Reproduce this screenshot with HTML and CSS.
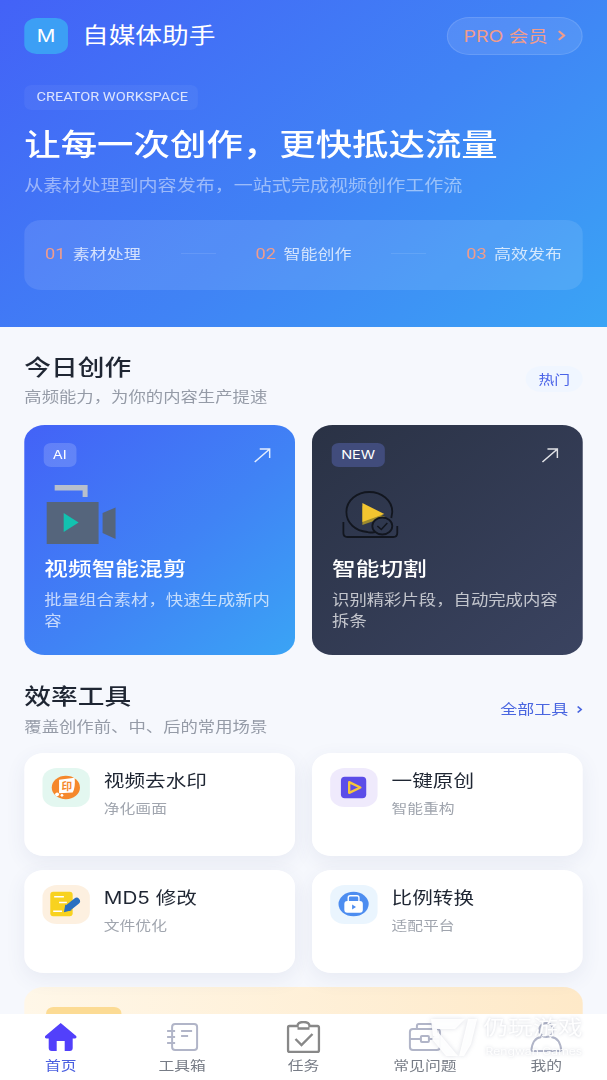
FILE: index.html
```html
<!DOCTYPE html>
<html lang="zh-CN">
<head>
  <meta charset="utf-8">
  <meta name="viewport" content="width=device-width, initial-scale=1.0">
  <title>自媒体助手</title>
  <link rel="stylesheet" href="styles.css">
</head>
<body>
  <div class="app">
    <main class="main">
      <header class="hero">
        <div class="topbar">
          <div class="brand">
            <div class="brandMark">M</div>
            <div class="brandName">自媒体助手</div>
          </div>
          <div class="proPill">
            <span>PRO 会员</span>
            <svg class="proArrow" viewBox="0 0 8 14"><path d="M1.5 2 L6.5 7 L1.5 12"/></svg>
          </div>
        </div>
        <div class="heroChip">CREATOR WORKSPACE</div>
        <h1 class="heroTitle">让每一次创作，更快抵达流量</h1>
        <p class="heroSub">从素材处理到内容发布，一站式完成视频创作工作流</p>
        <div class="steps">
          <div class="step"><span class="stepNum">01</span><span>素材处理</span></div>
          <div class="stepLine"></div>
          <div class="step"><span class="stepNum">02</span><span>智能创作</span></div>
          <div class="stepLine"></div>
          <div class="step"><span class="stepNum">03</span><span>高效发布</span></div>
        </div>
      </header>

      <section class="section">
        <div class="sectionHead">
          <div>
            <h2 class="sectionTitle">今日创作</h2>
            <p class="sectionSub">高频能力，为你的内容生产提速</p>
          </div>
          <span class="hotBadge">热门</span>
        </div>
        <div class="featureGrid">
          <div class="feature featureBlue">
            <div class="featureTop">
              <span class="featureTag">AI</span>
              <svg class="featureArrow" viewBox="0 0 17 15" preserveAspectRatio="none"><path d="M1 14 L16 1 M6 1 H16 V10"/></svg>
            </div>
            <svg class="featureIcon" viewBox="0 0 73 60" preserveAspectRatio="none">
              <path fill="#b7bfcd" d="M11 1 H44 V13 H39 V6.5 H11 Z"/>
              <rect fill="#55657c" x="3" y="18" width="52" height="42"/>
              <path fill="#55657c" d="M59 29 L72 23.5 V55 L59 49 Z"/>
              <path fill="#12c2b0" d="M20 29 L35 38.5 L20 48 Z"/>
            </svg>
            <h3 class="featureName">视频智能混剪</h3>
            <p class="featureDesc">批量组合素材，快速生成新内容</p>
          </div>
          <div class="feature featureDark">
            <div class="featureTop">
              <span class="featureTag featureTagNew">NEW</span>
              <svg class="featureArrow" viewBox="0 0 17 15" preserveAspectRatio="none"><path d="M1 14 L16 1 M6 1 H16 V10"/></svg>
            </div>
            <svg class="featureIcon" viewBox="0 0 73 60" preserveAspectRatio="none">
              <path fill="none" stroke="#12161f" stroke-width="1.8" d="M44 48 Q38 49 36 48 C24 47 15 39 15 28 C15 16 26 8 38 8 C50 8 61 16 61 28 L60 34"/>
              <path fill="none" stroke="#12161f" stroke-width="1.8" d="M12 38 V49 Q12 53 16 53 H62 Q66 53 66 49 V42"/>
              <path fill="#9c8a2e" d="M31 22 L54 33 L31 41 Z"/>
              <path fill="#f3c530" d="M31 19 L53 30 L31 38 Z"/>
              <ellipse cx="51" cy="42" rx="10" ry="8.5" fill="#2f384e" stroke="#12161f" stroke-width="1.8"/>
              <path fill="none" stroke="#12161f" stroke-width="1.6" d="M46 42 L50 45.5 L56 39"/>
            </svg>
            <h3 class="featureName">智能切割</h3>
            <p class="featureDesc">识别精彩片段，自动完成内容拆条</p>
          </div>
        </div>
      </section>

      <section class="section sectionTools">
        <div class="sectionHead">
          <div>
            <h2 class="sectionTitle">效率工具</h2>
            <p class="sectionSub">覆盖创作前、中、后的常用场景</p>
          </div>
          <span class="allTools">全部工具
            <svg class="allArrow" viewBox="0 0 6 10"><path d="M1 1.5 L4.5 5 L1 8.5"/></svg>
          </span>
        </div>
        <div class="toolGrid">
          <div class="tool">
            <div class="toolTile tileGreen">
              <svg viewBox="0 0 48 40" preserveAspectRatio="none">
                <ellipse cx="24" cy="20" rx="14.5" ry="12" fill="#f5882c"/>
                <path fill="#fff" d="M17 12 L33 10 Q34 20 31 25 L17 26 Z"/>
                <text class="sealText" x="25" y="23">印</text>
                <circle cx="15" cy="27" r="2" fill="#fff"/>
                <circle cx="20" cy="28" r="1.4" fill="#fff"/>
              </svg>
            </div>
            <div>
              <div class="toolName">视频去水印</div>
              <div class="toolSub">净化画面</div>
            </div>
          </div>
          <div class="tool">
            <div class="toolTile tilePurple">
              <svg viewBox="0 0 48 40" preserveAspectRatio="none">
                <rect x="11" y="9" width="26" height="22" rx="4" fill="#5b4de8"/>
                <path fill="none" stroke="#f5c63a" stroke-width="2.4" stroke-linejoin="round" d="M19.5 14.5 L31 20 L19.5 25.5 Z"/>
              </svg>
            </div>
            <div>
              <div class="toolName">一键原创</div>
              <div class="toolSub">智能重构</div>
            </div>
          </div>
          <div class="tool">
            <div class="toolTile tileOrange">
              <svg viewBox="0 0 48 40" preserveAspectRatio="none">
                <rect x="8" y="7" width="23" height="25" rx="3" fill="#f8d21f"/>
                <path stroke="#fff" stroke-width="1.6" d="M12 12 H22 M17 18 H25 M11 27 H20"/>
                <path stroke="#2a6fc0" stroke-width="7" stroke-linecap="round" d="M27 23 L35 16.5"/>
                <path fill="#2a6fc0" d="M22 28 L23.5 20 L30 26 Z"/>
              </svg>
            </div>
            <div>
              <div class="toolName">MD5 修改</div>
              <div class="toolSub">文件优化</div>
            </div>
          </div>
          <div class="tool">
            <div class="toolTile tileBlue">
              <svg viewBox="0 0 48 40" preserveAspectRatio="none">
                <ellipse cx="24" cy="19.5" rx="15.5" ry="12.5" fill="#4d8df0"/>
                <rect x="18.5" y="11" width="11" height="7" rx="2" fill="none" stroke="#fff" stroke-width="1.4"/>
                <rect x="14.5" y="16.5" width="19" height="12" rx="3" fill="#fff"/>
                <path fill="#4d8df0" d="M22.5 20 L26.5 22.5 L22.5 25 Z"/>
              </svg>
            </div>
            <div>
              <div class="toolName">比例转换</div>
              <div class="toolSub">适配平台</div>
            </div>
          </div>
        </div>
        <div class="promo"><div class="promoTag"></div></div>
      </section>
    </main>

    <nav class="tabbar">
      <div class="tab tabActive">
        <svg class="tabIcon" viewBox="0 0 34 32" preserveAspectRatio="none">
          <path class="homeFill" d="M17 2 L32.5 15 Q33.5 17 31 17.5 H29 V27 Q29 30 26 30 H21 V20 H13 V30 H8 Q5 30 5 27 V17.5 H3 Q0.5 17 1.5 15 Z"/>
        </svg>
        <span>首页</span>
      </div>
      <div class="tab">
        <svg class="tabIcon" viewBox="0 0 34 32" preserveAspectRatio="none">
          <rect class="softLine" x="7" y="3" width="25" height="26" rx="3"/>
          <path class="softLine" d="M2 10 H10 M2 16 H10 M2 22 H10 M16 10 H27 M16 15 H23"/>
        </svg>
        <span>工具箱</span>
      </div>
      <div class="tab">
        <svg class="tabIcon" viewBox="0 0 34 32" preserveAspectRatio="none">
          <path class="grayLine" d="M11 5 H3 Q1.5 5 1.5 7 V29 Q1.5 31 3 31 H31 Q32.5 31 32.5 29 V7 Q32.5 5 31 5 H23 Q23 1 17 1 Q11 1 11 5 Z M11 7.5 H23"/>
          <path class="grayLine" d="M9 18 L15 24 L26 13"/>
        </svg>
        <span>任务</span>
      </div>
      <div class="tab">
        <svg class="tabIcon" viewBox="0 0 34 32" preserveAspectRatio="none">
          <rect class="softLine" x="2" y="8" width="30" height="21" rx="3"/>
          <path class="softLine" d="M9 8 V5 Q9 3 11 3 H23 Q25 3 25 5 V8 M2 18 H13 M21 18 H32"/>
          <rect class="softLine" x="13" y="15" width="8" height="6" rx="1"/>
        </svg>
        <span>常见问题</span>
      </div>
      <div class="tab">
        <svg class="tabIcon" viewBox="0 0 34 32" preserveAspectRatio="none">
          <ellipse class="softLine" cx="17" cy="9" rx="7" ry="7"/>
          <path class="softLine" d="M2 30 Q3 17 12 16 M32 30 Q31 17 22 16 M2 30 H32"/>
        </svg>
        <span>我的</span>
      </div>
      <div class="watermark">
        <svg class="wmMark" viewBox="0 0 46 40" preserveAspectRatio="none">
          <path d="M0 1 H34 L24 11 H6 V18 L2 18 Z"/>
          <path d="M7 14 L27 38 H15 L1 21 Z"/>
          <path d="M37 1 H46 L40 26 L33 38 H28 Z"/>
        </svg>
        <div>
          <div class="wmName">仍玩游戏</div>
          <div class="wmEn">Rengwan Games</div>
        </div>
      </div>
    </nav>
  </div>
</body>
</html>
```

FILE: styles.css
```css
* {
  box-sizing: border-box;
}

html, body {
  margin: 0;
  height: 100%;
  overflow: hidden;
  background: #f6f8fd;
}

body {
  font-family: Inter, "Noto Sans CJK SC", sans-serif;
  color: #1f2633;
}

h1, h2, h3, p {
  margin: 0;
}

/* the whole capture is stretched sideways, so lay out at 500 wide and widen */
.app {
  width: 500px;
  height: 1080px;
  display: flex;
  flex-direction: column;
  transform: scaleX(1.214);
  transform-origin: 0 0;
}

.main {
  flex: 1;
  min-height: 0;
  overflow: hidden;
}

/* hero */
.hero {
  height: 327px;
  padding: 17px 20px 0;
  color: #fff;
  background: linear-gradient(135deg, #4362f7 0%, #4083f5 55%, #3aa4f5 100%);
}

.topbar {
  display: flex;
  align-items: center;
  justify-content: space-between;
}

.brand {
  display: flex;
  align-items: center;
  gap: 11.5px;
}

.brandMark {
  width: 36px;
  height: 36px;
  border-radius: 10px;
  background: #3c9ff5;
  font-size: 17px;
  line-height: 36px;
  text-align: center;
}

.brandName {
  padding-bottom: 2px;
  font-size: 22px;
  line-height: 34px;
}

.proPill {
  width: 112px;
  height: 38px;
  padding-bottom: 2px;
  display: flex;
  align-items: center;
  justify-content: center;
  gap: 8px;
  border: 1px solid rgba(255, 255, 255, 0.12);
  border-radius: 19px;
  background: rgba(255, 255, 255, 0.1);
  color: #f09c8c;
  font-size: 16px;
}

.proArrow {
  width: 7px;
  height: 13px;
  fill: none;
  stroke: #f09c8c;
  stroke-width: 2.2;
}

.heroChip {
  width: 143px;
  height: 25px;
  margin-top: 30px;
  padding-left: 10px;
  border-radius: 6px;
  background: rgba(255, 255, 255, 0.05);
  color: rgba(255, 255, 255, 0.8);
  font-family: Roboto, sans-serif;
  font-size: 12px;
  line-height: 24px;
  white-space: nowrap;
}

.heroTitle {
  margin-top: 14px;
  font-size: 30px;
  font-weight: 500;
  line-height: 40px;
  white-space: nowrap;
}

.heroSub {
  margin-top: 10px;
  color: rgba(255, 255, 255, 0.48);
  font-size: 15.7px;
  line-height: 24px;
  white-space: nowrap;
}

.steps {
  height: 70px;
  margin-top: 22px;
  padding: 0 17px 4px;
  display: flex;
  align-items: center;
  justify-content: space-between;
  border-radius: 14px;
  background: rgba(255, 255, 255, 0.1);
  color: rgba(255, 255, 255, 0.75);
  font-size: 14px;
}

.step {
  display: flex;
  align-items: center;
  gap: 6px;
}

.stepNum {
  color: #f09c8c;
  font-family: Roboto, sans-serif;
  font-size: 15px;
  line-height: 20px;
  padding-top: 1px;
}

.stepLine {
  width: 29px;
  height: 1px;
  background: rgba(255, 255, 255, 0.1);
}

/* sections */
.section {
  padding: 25px 20px 0;
}

.sectionTools {
  padding-top: 26px;
}

.sectionTools .sectionSub {
  margin-top: 6px;
}

.sectionHead {
  display: flex;
  align-items: center;
  justify-content: space-between;
}

.sectionTitle {
  font-size: 22px;
  font-weight: 500;
  line-height: 30px;
}

.sectionSub {
  margin-top: 5px;
  color: #959ba7;
  font-size: 14.3px;
  line-height: 20px;
}

.hotBadge {
  width: 47px;
  height: 26px;
  margin-top: -1px;
  border-radius: 13px;
  background: #f0f6ff;
  color: #4a63e8;
  font-size: 13px;
  line-height: 26px;
  text-align: center;
}

.allTools {
  margin-top: -2px;
  color: #4a66e0;
  font-size: 14px;
  white-space: nowrap;
}

.allArrow {
  width: 5px;
  height: 9px;
  margin-left: 3px;
  fill: none;
  stroke: #4a66e0;
  stroke-width: 1.8;
}

/* feature cards */
.featureGrid {
  display: grid;
  grid-template-columns: 1fr 1fr;
  gap: 14px;
  margin-top: 18px;
}

.feature {
  height: 230px;
  padding: 18px 16.5px 0;
  border-radius: 17px;
  color: #fff;
}

.featureBlue {
  background: linear-gradient(135deg, #4362f7 0%, #4083f5 55%, #3aa4f5 100%);
}

.featureDark {
  background: linear-gradient(135deg, #2a3245 0%, #3a4360 100%);
}

.featureTop {
  display: flex;
  align-items: center;
  justify-content: space-between;
  padding-right: 4px;
}

.featureTag {
  height: 24px;
  margin-left: -0.5px;
  padding: 0 7.5px;
  border-radius: 6px;
  background: rgba(255, 255, 255, 0.17);
  font-size: 12px;
  line-height: 24px;
}

.featureTagNew {
  padding: 0 8px;
  background: #414c7c;
  font-size: 12px;
}

.featureArrow {
  width: 14px;
  height: 15px;
  fill: none;
  stroke: rgba(255, 255, 255, 0.85);
  stroke-width: 1.6;
}

.featureIcon {
  display: block;
  width: 60px;
  height: 60px;
  margin-top: 17px;
  margin-left: -0.5px;
}

.featureName {
  margin-top: 12px;
  font-size: 19.5px;
  font-weight: 500;
  line-height: 27px;
}

.featureDesc {
  margin-top: 6px;
  color: rgba(255, 255, 255, 0.7);
  font-size: 14.3px;
  line-height: 21px;
}

/* tool cards */
.toolGrid {
  display: grid;
  grid-template-columns: 1fr 1fr;
  gap: 14px;
  margin-top: 16px;
}

.tool {
  height: 103px;
  padding: 15px;
  display: flex;
  align-items: flex-start;
  gap: 12px;
  border-radius: 16px;
  background: #fff;
  box-shadow: 0 6px 18px rgba(60, 80, 130, 0.08);
}

.toolTile {
  width: 38.5px;
  height: 39px;
  flex: none;
  border-radius: 12px;
}

.toolTile svg {
  display: block;
  width: 100%;
  height: 100%;
}

.tileGreen { background: #e3f7f0; }
.tilePurple { background: #efeafc; }
.tileOrange { background: #fdf0e0; }
.tileBlue { background: #eaf5fe; }

.sealText {
  fill: #f5882c;
  font-size: 11px;
  font-weight: 700;
  text-anchor: middle;
}

.toolName {
  font-size: 17px;
  line-height: 26px;
}

.toolSub {
  margin-top: 4px;
  color: #a0a5ae;
  font-size: 13px;
  line-height: 20px;
}

.promo {
  height: 120px;
  margin-top: 14px;
  padding: 20px 18px;
  border-radius: 16px;
  background: linear-gradient(90deg, #fff7e8, #fee9c8);
}

.promoTag {
  width: 62px;
  height: 24px;
  border-radius: 6px;
  background: #fcdb94;
}

/* bottom bar */
.tabbar {
  position: relative;
  height: 66px;
  flex: none;
  display: grid;
  grid-template-columns: repeat(5, 1fr);
  background: #fff;
}

.tab {
  padding-top: 7px;
  display: flex;
  flex-direction: column;
  align-items: center;
  color: #777c86;
  font-size: 13px;
  line-height: 14px;
}

.tabActive {
  color: #4a5fe0;
}

.tabIcon {
  display: block;
  width: 28px;
  height: 32px;
  margin-bottom: 5px;
}

.homeFill {
  fill: #5240fb;
}

.softLine {
  fill: none;
  stroke: #b1b5c8;
  stroke-width: 2;
}

.grayLine {
  fill: none;
  stroke: #888;
  stroke-width: 2.4;
}

/* watermark laid over the bar */
.watermark {
  position: absolute;
  top: 1px;
  left: 355px;
  display: flex;
  gap: 5px;
  color: rgba(255, 255, 255, 0.95);
  text-shadow: 0 0 3px rgba(90, 100, 130, 0.28);
}

.wmMark {
  width: 38px;
  height: 40px;
  margin-top: 3px;
  fill: rgba(255, 255, 255, 0.95);
  filter: drop-shadow(0 0 2px rgba(90, 100, 130, 0.22));
}

.wmName {
  font-size: 20.5px;
  line-height: 26px;
  white-space: nowrap;
}

.wmEn {
  margin-top: 5px;
  padding-left: 2px;
  font-size: 10px;
  line-height: 10px;
  white-space: nowrap;
}
```
